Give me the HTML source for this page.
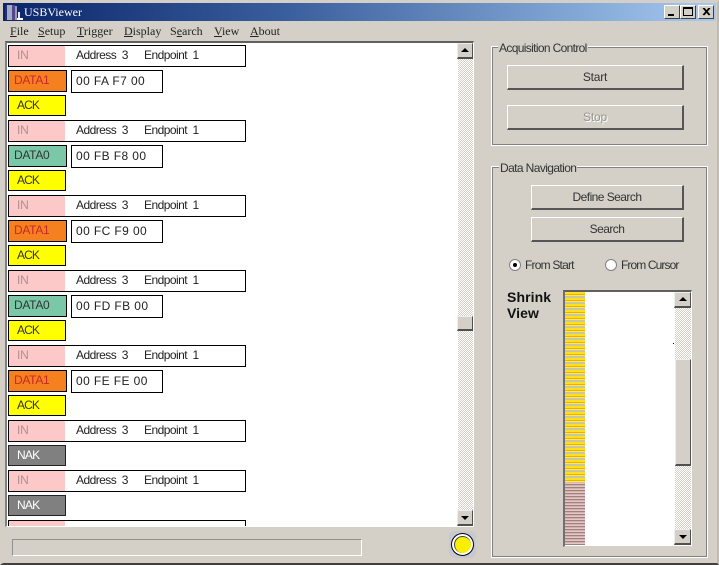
<!DOCTYPE html>
<html><head><meta charset="utf-8"><style>
html,body{margin:0;padding:0;width:719px;height:565px;overflow:hidden;background:#d4d0c8}
body{position:relative;font:12px/1 "Liberation Sans",sans-serif;color:#000}
div,span.a{position:absolute;box-sizing:border-box}
.t{white-space:nowrap}
.m{position:absolute;top:24px;font:12px/14px "Liberation Serif",serif;white-space:nowrap;color:#222}
.m u{text-decoration:underline}
.in{left:8px;width:238px;height:22px;border:1px solid #000;background:#fff}
.in i{position:absolute;left:0;top:0;width:56px;height:20px;background:#fdc8c8}
.in b,.in s,.in em{position:absolute;top:2px;font:normal 12px/14px "Liberation Sans",sans-serif;text-decoration:none;white-space:nowrap;letter-spacing:-.55px}
.in b{left:8px;color:#b09090;letter-spacing:-.2px}
.in s{left:67px;color:#222}
.in em{left:135px;color:#222}
.p{left:8px;height:22px;border:1px solid #000;font:12px/19px "Liberation Sans",sans-serif;white-space:nowrap}
.d1{width:59px;background:#f58020;color:#c82828;padding-left:5px;letter-spacing:-.3px}
.d0{width:59px;background:#7ac8a8;color:#333;padding-left:5px;letter-spacing:-.3px}
.ack{width:58px;height:21px;background:#ff0;color:#333;padding-left:8px;letter-spacing:-.9px}
.nak{width:58px;height:21px;background:#808080;color:#fff;padding-left:8px;letter-spacing:-.8px;border-color:#222}
.h{left:71px;width:92px;height:23px;border:1px solid #000;background:#fff;padding-left:4px;font:12px/20px "Liberation Sans",sans-serif;white-space:nowrap;letter-spacing:.4px;color:#222}
.chk{background-color:#d4d0c8;background-image:conic-gradient(#fff 25%,#d4d0c8 0 50%,#fff 0 75%,#d4d0c8 0);background-size:2px 2px}
.sb{background:#d4d0c8;border-top:1px solid #eee;border-left:1px solid #eee;border-right:1px solid #505050;border-bottom:2px solid #505050}
.btn{background:#d4d0c8;border-top:1px solid #fff;border-left:1px solid #fff;border-right:2px solid #555;border-bottom:2px solid #555;text-align:center;line-height:23px;white-space:nowrap;color:#333;letter-spacing:-.55px}
.grp{border:1px solid #fff;outline:1px solid #808080;outline-offset:-2px}
.leg{background:#d4d0c8;padding:0 1px;white-space:nowrap;line-height:14px;color:#333;letter-spacing:-.65px}
.up,.dn{width:0;height:0;border-left:4px solid transparent;border-right:4px solid transparent}
.up{border-bottom:4px solid #000}
.dn{border-top:4px solid #000}
</style></head><body>
<!-- window frame -->
<div style="left:0;top:0;width:719px;height:565px;border-top:3px solid #d4d0c8;border-left:3px solid #d4d0c8;border-right:2px solid #c0bcb4;border-bottom:2px solid #404040"></div>
<!-- title bar -->
<div style="left:3px;top:3px;width:713px;height:18px;background:linear-gradient(90deg,#0a246a 0%,#3a5f9e 40%,#a6caf0 100%)"></div>
<svg style="position:absolute;left:5px;top:4px" width="18" height="17"><rect x="0" y="1" width="2" height="15" fill="#203070"/><rect x="2" y="1" width="5" height="15" fill="#a8a8c8"/><rect x="7" y="1" width="3" height="15" fill="#504888"/><rect x="10" y="2" width="2" height="14" fill="#9898c0"/><rect x="13" y="8" width="2" height="7" fill="#e8e8f0"/><rect x="12" y="14" width="6" height="2" fill="#fff"/></svg>
<div class="t" style="left:24px;top:5px;color:#fff;font:12px/14px 'Liberation Serif',serif">USBViewer</div>
<div style="left:664px;top:5px;width:16px;height:14px;background:#d4d0c8;border-top:1px solid #fff;border-left:1px solid #fff;border-right:1px solid #404040;border-bottom:1px solid #404040"><div style="left:3px;top:8px;width:6px;height:2px;background:#000"></div></div>
<div style="left:680px;top:5px;width:16px;height:14px;background:#d4d0c8;border-top:1px solid #fff;border-left:1px solid #fff;border-right:1px solid #404040;border-bottom:1px solid #404040"><div style="left:2px;top:1px;width:10px;height:9px;border:1px solid #000;border-top-width:2px"></div></div>
<div style="left:698px;top:5px;width:16px;height:14px;background:#d4d0c8;border-top:1px solid #fff;border-left:1px solid #fff;border-right:1px solid #404040;border-bottom:1px solid #404040"><svg style="position:absolute;left:3px;top:2px" width="9" height="8"><path d="M1 0L7 7M2 0L8 7M7 0L1 7M8 0L2 7" stroke="#000" stroke-width="1" fill="none"/></svg></div>
<!-- menu -->
<span class="m" style="left:10px"><u>F</u>ile</span>
<span class="m" style="left:38px"><u>S</u>etup</span>
<span class="m" style="left:77px"><u>T</u>rigger</span>
<span class="m" style="left:124px"><u>D</u>isplay</span>
<span class="m" style="left:170px">S<u>e</u>arch</span>
<span class="m" style="left:214px"><u>V</u>iew</span>
<span class="m" style="left:250px"><u>A</u>bout</span>
<!-- list -->
<div style="left:5px;top:41px;width:469px;height:486px;background:#fff;border-top:2px solid #606060;border-left:2px solid #808080;border-right:1px solid #fff;border-bottom:1px solid #fff;overflow:hidden">
<div style="left:-7px;top:-43px;width:475px;height:570px">
<div class="in" style="top:45px"><i></i><b>IN</b><s>Address&nbsp; 3</s><em>Endpoint&nbsp; 1</em></div>
<div class="p d1" style="top:70px">DATA1</div><div class="h" style="top:70px">00 FA F7 00</div>
<div class="p ack" style="top:95px">ACK</div>
<div class="in" style="top:120px"><i></i><b>IN</b><s>Address&nbsp; 3</s><em>Endpoint&nbsp; 1</em></div>
<div class="p d0" style="top:145px">DATA0</div><div class="h" style="top:145px">00 FB F8 00</div>
<div class="p ack" style="top:170px">ACK</div>
<div class="in" style="top:195px"><i></i><b>IN</b><s>Address&nbsp; 3</s><em>Endpoint&nbsp; 1</em></div>
<div class="p d1" style="top:220px">DATA1</div><div class="h" style="top:220px">00 FC F9 00</div>
<div class="p ack" style="top:245px">ACK</div>
<div class="in" style="top:270px"><i></i><b>IN</b><s>Address&nbsp; 3</s><em>Endpoint&nbsp; 1</em></div>
<div class="p d0" style="top:295px">DATA0</div><div class="h" style="top:295px">00 FD FB 00</div>
<div class="p ack" style="top:320px">ACK</div>
<div class="in" style="top:345px"><i></i><b>IN</b><s>Address&nbsp; 3</s><em>Endpoint&nbsp; 1</em></div>
<div class="p d1" style="top:370px">DATA1</div><div class="h" style="top:370px">00 FE FE 00</div>
<div class="p ack" style="top:395px">ACK</div>
<div class="in" style="top:420px"><i></i><b>IN</b><s>Address&nbsp; 3</s><em>Endpoint&nbsp; 1</em></div>
<div class="p nak" style="top:445px">NAK</div>
<div class="in" style="top:470px"><i></i><b>IN</b><s>Address&nbsp; 3</s><em>Endpoint&nbsp; 1</em></div>
<div class="p nak" style="top:495px">NAK</div>
<div class="in" style="top:520px"><i></i></div>
</div>
</div>
<!-- list scrollbar -->
<div class="chk" style="left:458px;top:43px;width:15px;height:483px"></div>
<div class="sb" style="left:457px;top:43px;width:16px;height:16px"><div class="up" style="left:3px;top:4px"></div></div>
<div class="sb" style="left:457px;top:316px;width:16px;height:15px"></div>
<div class="sb" style="left:457px;top:510px;width:16px;height:16px"><div class="dn" style="left:3px;top:5px"></div></div>
<!-- status -->
<div style="left:12px;top:539px;width:350px;height:17px;border-top:1px solid #909090;border-left:1px solid #909090;border-right:1px solid #fff;border-bottom:1px solid #fff"></div>
<div style="left:449px;top:531px;width:27px;height:27px;background:#c8c8d2;border-radius:6px"></div>
<div style="left:451px;top:533px;width:23px;height:23px;border-radius:50%;background:#fff;border:1px solid #000"><div style="left:2px;top:2px;width:17px;height:17px;border-radius:50%;background:#f8f000;border-top:1px solid #444;border-left:1px solid #444"></div></div>
<!-- acquisition -->
<div class="grp" style="left:491px;top:46px;width:217px;height:100px"></div>
<div class="leg" style="left:498px;top:41px">Acquisition Control</div>
<div class="btn" style="left:507px;top:65px;width:177px;height:25px;letter-spacing:-.2px">Start</div>
<div class="btn" style="left:507px;top:105px;width:177px;height:25px;color:#9a968e;text-shadow:1px 1px 0 #fff;letter-spacing:-.2px">Stop</div>
<!-- data navigation -->
<div class="grp" style="left:491px;top:166px;width:217px;height:392px"></div>
<div class="leg" style="left:499px;top:161px;letter-spacing:-.6px">Data Navigation</div>
<div class="btn" style="left:531px;top:185px;width:153px;height:25px">Define Search</div>
<div class="btn" style="left:531px;top:217px;width:153px;height:25px">Search</div>
<div style="left:509px;top:259px;width:12px;height:12px;border-radius:50%;background:#fff;border:1px solid #808080"><div style="left:3px;top:3px;width:4px;height:4px;border-radius:50%;background:#000"></div></div>
<div class="t" style="left:525px;top:258px;line-height:14px;color:#333;letter-spacing:-.8px">From Start</div>
<div style="left:605px;top:259px;width:12px;height:12px;border-radius:50%;background:#fff;border:1px solid #808080"></div>
<div class="t" style="left:621px;top:258px;line-height:14px;color:#333;letter-spacing:-.9px">From Cursor</div>
<div class="t" style="left:507px;top:289px;font:bold 14px/16px 'Liberation Sans',sans-serif;letter-spacing:.1px;color:#111">Shrink</div>
<div class="t" style="left:507px;top:305px;font:bold 14px/16px 'Liberation Sans',sans-serif;letter-spacing:.1px;color:#111">View</div>
<!-- shrink box -->
<div style="left:563px;top:290px;width:129px;height:257px;background:#fff;border-top:2px solid #606060;border-left:2px solid #707070;border-right:1px solid #fff;border-bottom:1px solid #d4d0c8"></div>
<div style="left:565px;top:292px;width:20px;height:191px;background:repeating-linear-gradient(180deg,#ffe020 0,#ffe020 2px,#f4b000 2px,#f4b000 3px,#ffe860 3px,#ffe860 4px,#c8c8a0 4px,#c8c8a0 6px)"></div>
<div style="left:565px;top:483px;width:20px;height:62px;background:repeating-linear-gradient(180deg,#e4c8c0 0,#e4c8c0 1px,#a08080 1px,#a08080 2px,#d0b0b0 2px,#d0b0b0 3px)"></div>
<div class="chk" style="left:675px;top:292px;width:16px;height:253px"></div>
<div class="sb" style="left:674px;top:292px;width:17px;height:16px"><div class="up" style="left:4px;top:4px"></div></div>
<div class="sb" style="left:675px;top:359px;width:16px;height:107px"></div>
<div class="sb" style="left:674px;top:529px;width:17px;height:16px"><div class="dn" style="left:4px;top:5px"></div></div>
<div style="left:673px;top:343px;width:1px;height:1px;background:#000"></div>
</body></html>
